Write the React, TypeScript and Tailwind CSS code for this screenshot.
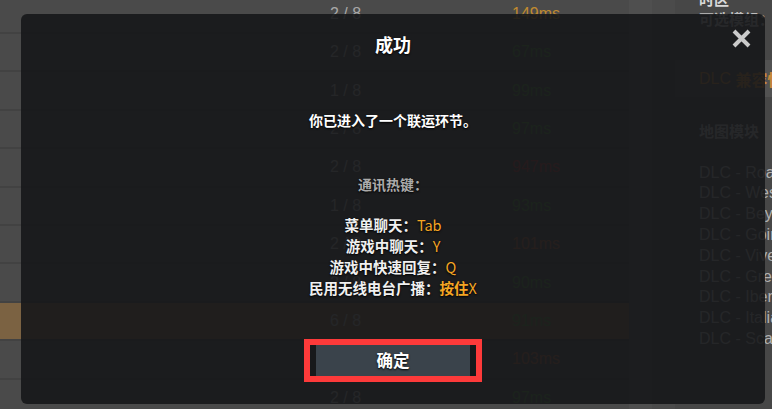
import React from "react";

const rows: { p: string; ms: string; c: string; hl?: boolean }[] = [
  { p: "2 / 8", ms: "149ms", c: "text-[#c08a30]" },
  { p: "2 / 8", ms: "67ms", c: "text-[#4f8a3a]" },
  { p: "1 / 8", ms: "99ms", c: "text-[#4f8a3a]" },
  { p: "2 / 8", ms: "97ms", c: "text-[#4f8a3a]" },
  { p: "2 / 8", ms: "947ms", c: "text-[#b03a3a]" },
  { p: "1 / 8", ms: "93ms", c: "text-[#4f8a3a]" },
  { p: "2 / 8", ms: "101ms", c: "text-[#b0603a]" },
  { p: "2 / 8", ms: "90ms", c: "text-[#4f8a3a]" },
  { p: "6 / 8", ms: "91ms", c: "text-[#4f8a3a]", hl: true },
  { p: "1 / 8", ms: "103ms", c: "text-[#b0603a]" },
  { p: "2 / 8", ms: "97ms", c: "text-[#4f8a3a]" },
];

const dlcs = [
  "DLC - Road to the Black Sea",
  "DLC - West Balkans",
  "DLC - Beyond the Baltic Sea",
  "DLC - Going East!",
  "DLC - Vive la France !",
  "DLC - Greece",
  "DLC - Iberia",
  "DLC - Italia",
  "DLC - Scandinavia",
];

export default function App() {
  return (
    <div
      className="relative w-[772px] h-[409px] overflow-hidden bg-[#4a4a4a]"
      style={{ fontFamily: '"Noto Sans CJK SC", "Noto Sans", sans-serif' }}
    >
      {/* background page */}
      <div className="flex h-full">
        <div className="w-[629px] flex flex-col -mt-[4.4px]">
          {rows.map((r, i) => (
            <div
              key={i}
              className={`flex items-center h-[38.4px] shrink-0 border-b-2 border-[#424242] ${
                r.hl ? "bg-[#7b6242]" : "bg-[#4a4a4a]"
              }`}
            >
              <span className="ml-[330px] w-[182px] text-[16px] text-[#a8a8a8]" style={{ fontFamily: '"Liberation Sans", sans-serif' }}>
                {r.p}
              </span>
              <span className={`text-[16px] ${r.c}`} style={{ fontFamily: '"Liberation Sans", sans-serif' }}>
                {r.ms}
              </span>
            </div>
          ))}
        </div>
        <div className="w-[23px] bg-[#4f4f4f]" />
        <div className="w-[23px] bg-[#4b4b4b]" />
        <div className="flex-1 bg-[#474747] flex flex-col overflow-hidden whitespace-nowrap">
          <div className="-mt-[11px] pl-[24px] text-[15px] font-bold leading-[20px] text-[#d8d8d8]">时区</div>
          <div className="pl-[24px] text-[15px] font-bold leading-[20px] text-[#bdbdbd]">可选模组：</div>
          <div className="mt-[31px] h-[37px] bg-[#525252] pl-[24px] flex items-center text-[16px] text-[#c8883a]">
            <span style={{ fontFamily: '"Liberation Sans", sans-serif' }}>DLC&nbsp;</span>
            <span className="font-bold">兼容性</span>
          </div>
          <div className="mt-[24px] pl-[24px] text-[15px] font-bold leading-[20px] text-[#b8b8b8]">地图模块</div>
          <div className="mt-[21.6px] pl-[24px] flex flex-col text-[16px] leading-[20.8px] text-[#b0b0b0]" style={{ fontFamily: '"Liberation Sans", sans-serif' }}>
            {dlcs.map((d) => (
              <div key={d}>{d}</div>
            ))}
          </div>
        </div>
      </div>

      {/* modal */}
      <div className="absolute left-[21px] top-[14px] w-[744px] h-[390px] rounded-[6px] bg-[rgba(22,23,25,0.9)] flex flex-col items-center [text-shadow:0_1px_2px_#000]">
        <button className="absolute right-[13px] top-[14px] w-[21px] h-[21px]">
          <svg viewBox="0 0 21 21" width="21" height="21">
            <path d="M3 3 L18 18 M18 3 L3 18" stroke="#cacaca" strokeWidth="4" strokeLinecap="butt" />
          </svg>
        </button>
        <div className="mt-[17px] text-[18px] leading-[26px] font-bold text-white">成功</div>
        <div className="mt-[53px] text-[14px] leading-[20px] font-bold text-white">你已进入了一个联运环节。</div>
        <div className="mt-[44px] text-[14px] leading-[20px] font-bold text-[#ababab]">通讯热键：</div>
        <div className="mt-[19.5px] flex flex-col items-center text-[14.5px] leading-[21px] font-bold text-[#f0f0f0]">
          <div>
            菜单聊天：<span className="font-normal text-[#f5a623]">Tab</span>
          </div>
          <div>
            游戏中聊天：<span className="font-normal text-[#f5a623]">Y</span>
          </div>
          <div>
            游戏中快速回复：<span className="font-normal text-[#f5a623]">Q</span>
          </div>
          <div>
            民用无线电台广播：<span className="text-[#f5a623]">按住</span>
            <span className="font-normal text-[#f5a623]">X</span>
          </div>
        </div>
        <div className="mt-[41.5px] border-[6px] border-[#fd3a3a] bg-[#17191b] px-[6px] flex">
          <div className="w-[154px] h-[31px] bg-[#3a434b] flex items-center justify-center text-[16.5px] font-bold text-white">
            确定
          </div>
        </div>
      </div>
    </div>
  );
}
